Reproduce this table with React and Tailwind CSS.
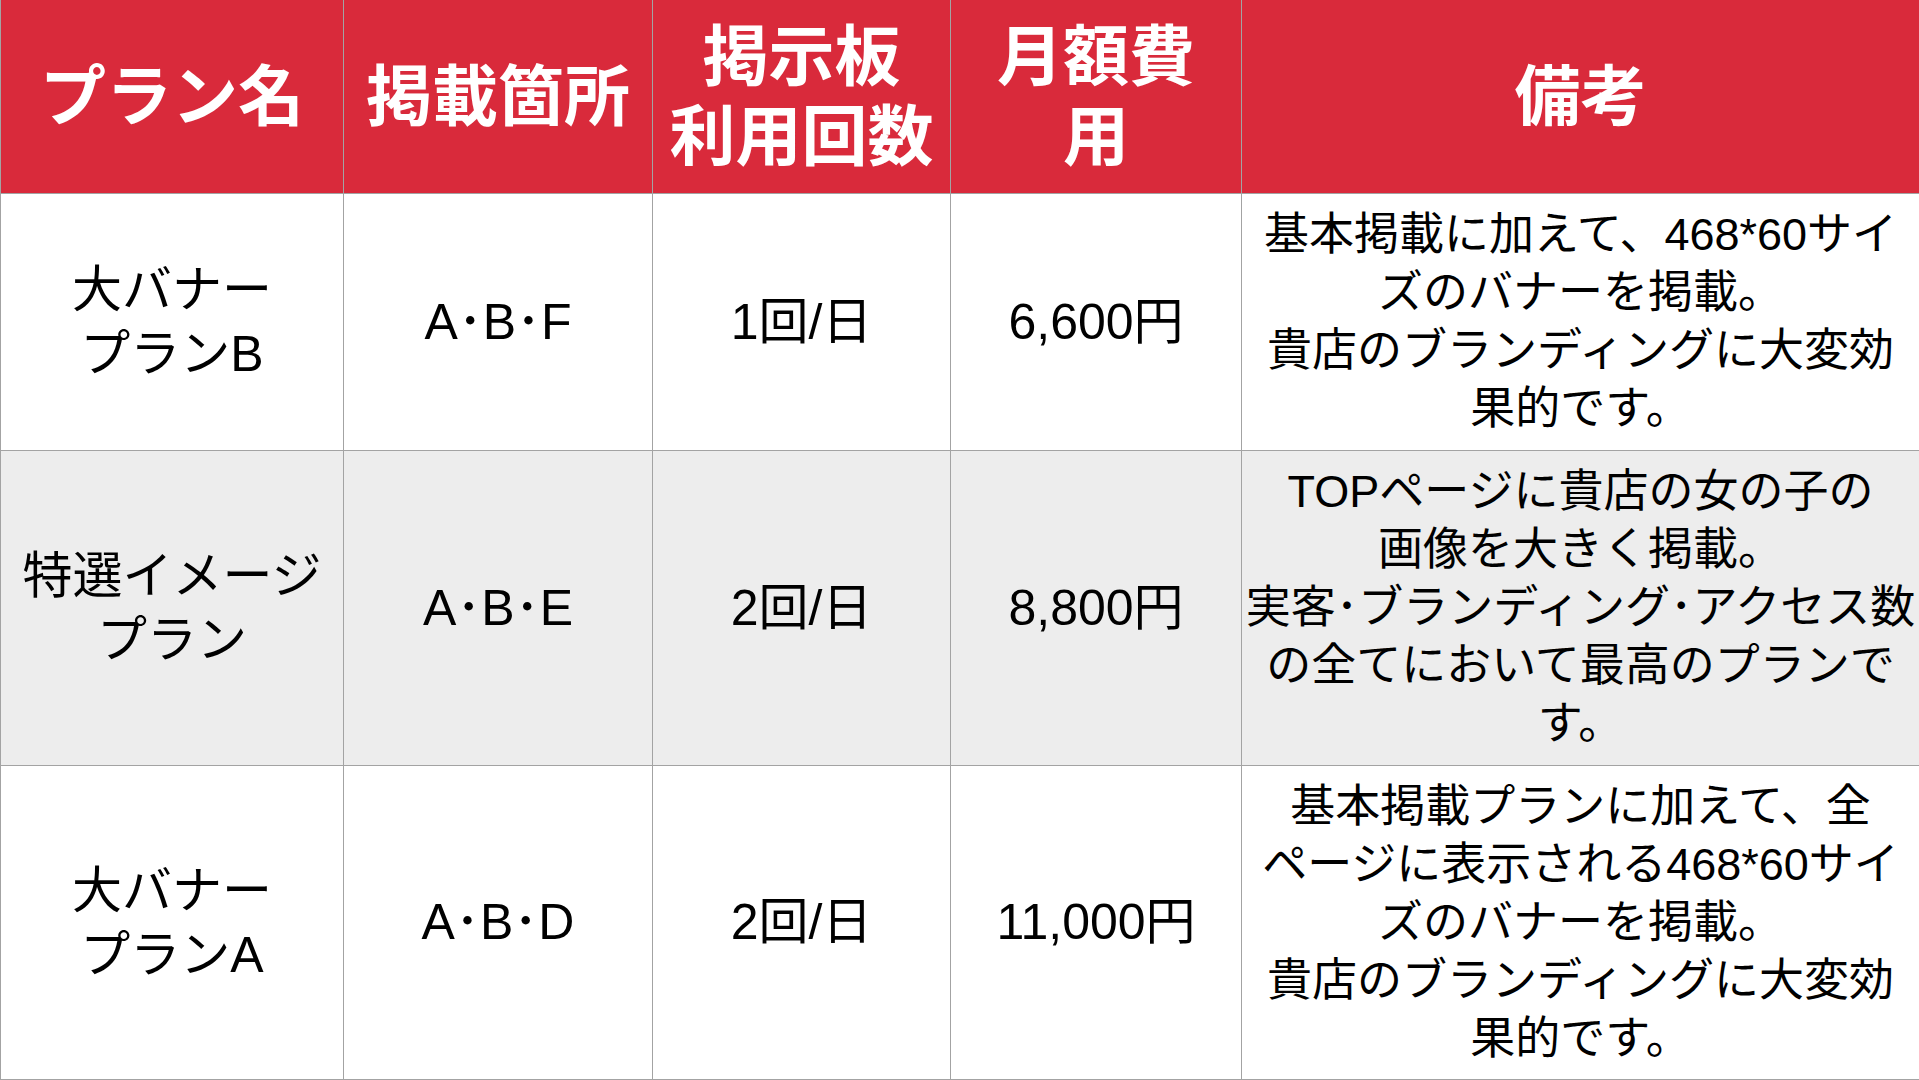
import React from "react";

const font = "font-['Liberation_Sans','Noto_Sans_CJK_JP',sans-serif]";

const headers = [
  ["プラン名"],
  ["掲載箇所"],
  ["掲示板", "利用回数"],
  ["月額費", "用"],
  ["備考"],
];

const rows = [
  {
    bg: "bg-white",
    name: ["大バナー", "プランB"],
    place: "A･B･F",
    count: "1回/日",
    price: "6,600円",
    note: [
      "基本掲載に加えて、468*60サイ",
      "ズのバナーを掲載。",
      "貴店のブランディングに大変効",
      "果的です。",
    ],
  },
  {
    bg: "bg-[#ededed]",
    name: ["特選イメージ", "プラン"],
    place: "A･B･E",
    count: "2回/日",
    price: "8,800円",
    note: [
      "TOPページに貴店の女の子の",
      "画像を大きく掲載。",
      "実客･ブランディング･アクセス数",
      "の全てにおいて最高のプランで",
      "す。",
    ],
  },
  {
    bg: "bg-white",
    name: ["大バナー", "プランA"],
    place: "A･B･D",
    count: "2回/日",
    price: "11,000円",
    note: [
      "基本掲載プランに加えて、全",
      "ページに表示される468*60サイ",
      "ズのバナーを掲載。",
      "貴店のブランディングに大変効",
      "果的です。",
    ],
  },
];

function Lines({ lines, className }) {
  return (
    <div className={className}>
      {lines.map((l) => (
        <div key={l} className="whitespace-nowrap">
          {l}
        </div>
      ))}
    </div>
  );
}

export default function App() {
  return (
    <div className={`w-[1919px] h-[1080px] overflow-hidden bg-[#a3a3a3] pl-px pb-px ${font}`}>
      <div className="grid h-full grid-cols-[342px_308px_297px_290px_677px] grid-rows-[193px_256px_314px_313px] gap-px">
        {/* header */}
        {headers.map((h, i) => (
          <div
            key={i}
            className="bg-[#d92a3b] flex items-center justify-center text-white font-bold text-[66px] leading-[80px] text-center"
          >
            <Lines lines={h} />
          </div>
        ))}

        {/* body rows */}
        {rows.map((r, i) => (
          <React.Fragment key={i}>
            <div className={`${r.bg} flex items-center justify-center text-black text-[50px] leading-[64px] text-center`}>
              <Lines lines={r.name} />
            </div>
            <div className={`${r.bg} flex items-center justify-center text-black text-[50px] text-center`}>
              {r.place}
            </div>
            <div className={`${r.bg} flex items-center justify-center text-black text-[50px] text-center`}>
              {r.count}
            </div>
            <div className={`${r.bg} flex items-center justify-center text-black text-[50px] text-center`}>
              {r.price}
            </div>
            <div className={`${r.bg} flex items-center justify-center text-black text-[45px] leading-[58px] text-center`}>
              <Lines lines={r.note} />
            </div>
          </React.Fragment>
        ))}
      </div>
    </div>
  );
}
